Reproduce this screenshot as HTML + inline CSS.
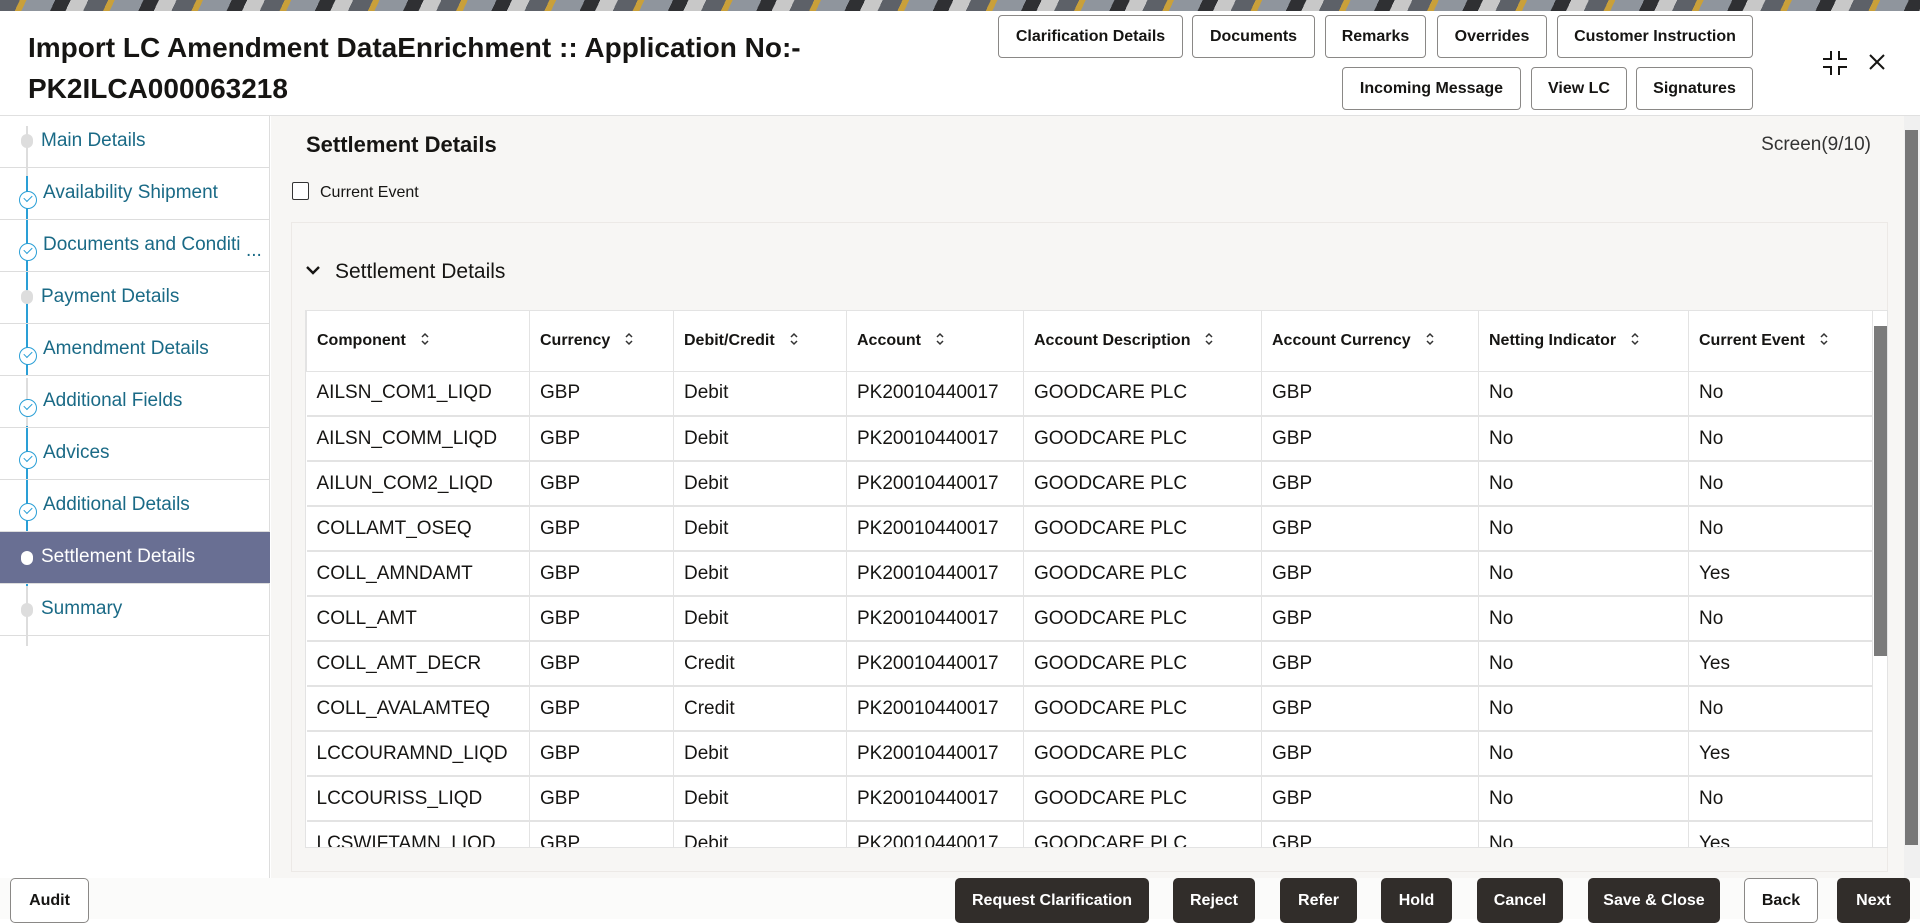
<!DOCTYPE html>
<html><head><meta charset="utf-8">
<style>
*{box-sizing:border-box;margin:0;padding:0}
body{width:1920px;height:919px;overflow:hidden;font-family:"Liberation Sans",sans-serif;background:#fff;position:relative;color:#161513}
.banner{position:absolute;left:0;top:0;width:1920px;height:11px;background:repeating-linear-gradient(115deg,#5d6168 0 18px,#c9a03a 18px 24px,#8f959d 24px 50px,#2f3033 50px 64px,#c8c8c8 64px 80px)}
.header{position:absolute;left:0;top:11px;width:1920px;height:105px;background:#fff;border-bottom:1px solid #e0e0e0}
.title{position:absolute;left:28px;top:16px;font-size:28px;font-weight:bold;line-height:41px;color:#161513}
.btn{position:absolute;height:43px;border:1px solid #8a8886;border-radius:4px;background:#fff;font-size:16px;font-weight:bold;display:flex;align-items:center;justify-content:center;color:#161513}
.side{position:absolute;left:0;top:116px;width:270px;height:803px;background:#fff;border-right:1px solid #ddd}
.item{position:absolute;left:0;width:270px;height:52px;border-bottom:1px solid #ddd;font-size:19px;color:#1a6a86;padding-left:41px;line-height:50px;white-space:nowrap}
.item.active{background:#696f93;color:#fff}
.vline{position:absolute;left:26px;width:2px}
.dot{position:absolute;left:21px;width:12px;height:14px;border-radius:6px;background:#ddd}
.chk{position:absolute;left:19px;width:18px;height:18px;border:1.5px solid #2a9fd6;border-radius:50%;background:#fff}
.chk:after{content:"";position:absolute;left:4px;top:3px;width:7px;height:4px;border-left:1.5px solid #2a9fd6;border-bottom:1.5px solid #2a9fd6;transform:rotate(-45deg)}
.main{position:absolute;left:271px;top:116px;width:1633px;height:762px;background:#f7f6f4}
.panel{position:absolute;left:291px;top:222px;width:1597px;height:650px;background:#f7f6f4;border:1px solid #ece9e6}
table{position:absolute;left:305px;top:310px;width:1583px;border-collapse:collapse;background:#fff}
th{height:60px;font-size:16px;font-weight:bold;text-align:left;padding-left:10px;border:1px solid #e3e3e3;border-top:none;white-space:nowrap}
td{height:45px;font-size:19px;padding-left:10px;border-right:1px solid #e3e3e3;border-bottom:2px solid #e3e3e3;white-space:nowrap}
.s{display:inline-block;margin-left:14px;vertical-align:-1px}
.fb{position:absolute;top:878px;height:45px;border-radius:5px;background:#312d2a;color:#fff;font-size:16px;font-weight:bold;display:flex;align-items:center;justify-content:center}
</style></head><body>
<div class="banner"></div>
<div class="header">
<div class="title">Import LC Amendment DataEnrichment :: Application No:-<br>PK2ILCA000063218</div>
</div>
<div class="btn" style="left:998px;top:15px;width:185px">Clarification Details</div>
<div class="btn" style="left:1192px;top:15px;width:123px">Documents</div>
<div class="btn" style="left:1325px;top:15px;width:101px">Remarks</div>
<div class="btn" style="left:1437px;top:15px;width:110px">Overrides</div>
<div class="btn" style="left:1557px;top:15px;width:196px">Customer Instruction</div>
<div class="btn" style="left:1342px;top:67px;width:179px">Incoming Message</div>
<div class="btn" style="left:1531px;top:67px;width:96px">View LC</div>
<div class="btn" style="left:1636px;top:67px;width:117px">Signatures</div>
<svg style="position:absolute;left:1822px;top:50px" width="26" height="26" viewBox="0 0 26 26" fill="none" stroke="#161513" stroke-width="2"><path d="M9 1v8H1M17 1v8h8M9 25v-8H1M17 25v-8h8"/></svg>
<svg style="position:absolute;left:1869px;top:54px" width="16" height="16" viewBox="0 0 16 16" stroke="#161513" stroke-width="2"><path d="M1 1l14 14M15 1L1 15"/></svg>

<div class="side">
<div class="vline" style="top:10px;height:50px;background:#ddd"></div>
<div class="vline" style="top:60px;height:200px;background:#2a9fd6"></div>
<div class="vline" style="top:262px;height:48px;background:#ddd"></div>
<div class="vline" style="top:310px;height:210px;background:#2a9fd6"></div>
<div class="vline" style="top:470px;height:60px;background:#ddd"></div>
<div class="item" style="top:0">Main Details</div>
<div class="item" style="top:52px;padding-left:43px">Availability Shipment</div>
<div class="item" style="top:104px;padding-left:43px">Documents and Conditi<span style="position:absolute;left:246px;top:6px">...</span></div>
<div class="item" style="top:156px">Payment Details</div>
<div class="item" style="top:208px;padding-left:43px">Amendment Details</div>
<div class="item" style="top:260px;padding-left:43px">Additional Fields</div>
<div class="item" style="top:312px;padding-left:43px">Advices</div>
<div class="item" style="top:364px;padding-left:43px">Additional Details</div>
<div class="item active" style="top:416px">Settlement Details</div>
<div class="item" style="top:468px">Summary</div>
<div class="dot" style="top:18px"></div>
<div class="chk" style="top:75px"></div>
<div class="chk" style="top:127px"></div>
<div class="dot" style="top:174px"></div>
<div class="chk" style="top:231px"></div>
<div class="chk" style="top:283px"></div>
<div class="chk" style="top:335px"></div>
<div class="chk" style="top:387px"></div>
<div class="dot" style="top:435px;background:#fff"></div>
<div class="dot" style="top:487px"></div>
</div>

<div class="main"></div>
<div style="position:absolute;left:306px;top:132px;font-size:22px;font-weight:bold">Settlement Details</div>
<div style="position:absolute;right:49px;top:134px;font-size:19px;color:#333">Screen(9/10)</div>
<div style="position:absolute;left:292px;top:182px;width:17px;height:18px;border:1.5px solid #333;border-radius:2px;background:#fff"></div>
<div style="position:absolute;left:320px;top:184px;font-size:16px">Current Event</div>
<div class="panel"></div>
<svg style="position:absolute;left:305px;top:265px" width="16" height="11" viewBox="0 0 16 11" fill="none" stroke="#161513" stroke-width="2.4"><path d="M2 2l6 6 6-6"/></svg>
<div style="position:absolute;left:335px;top:260px;font-size:21px">Settlement Details</div>
<div style="position:absolute;left:305px;top:310px;width:1583px;height:538px;overflow:hidden;background:#fff;border:1px solid #e3e3e3">
<table style="left:0;top:0;width:1567px">
<tr><th style="width:223px">Component<svg class="s" width="10" height="14" viewBox="0 0 10 14" fill="none" stroke="#333" stroke-width="1.5"><path d="M2 5l3-3 3 3M2 9l3 3 3-3"/></svg></th><th style="width:144px">Currency<svg class="s" width="10" height="14" viewBox="0 0 10 14" fill="none" stroke="#333" stroke-width="1.5"><path d="M2 5l3-3 3 3M2 9l3 3 3-3"/></svg></th><th style="width:173px">Debit/Credit<svg class="s" width="10" height="14" viewBox="0 0 10 14" fill="none" stroke="#333" stroke-width="1.5"><path d="M2 5l3-3 3 3M2 9l3 3 3-3"/></svg></th><th style="width:177px">Account<svg class="s" width="10" height="14" viewBox="0 0 10 14" fill="none" stroke="#333" stroke-width="1.5"><path d="M2 5l3-3 3 3M2 9l3 3 3-3"/></svg></th><th style="width:238px">Account Description<svg class="s" width="10" height="14" viewBox="0 0 10 14" fill="none" stroke="#333" stroke-width="1.5"><path d="M2 5l3-3 3 3M2 9l3 3 3-3"/></svg></th><th style="width:217px">Account Currency<svg class="s" width="10" height="14" viewBox="0 0 10 14" fill="none" stroke="#333" stroke-width="1.5"><path d="M2 5l3-3 3 3M2 9l3 3 3-3"/></svg></th><th style="width:210px">Netting Indicator<svg class="s" width="10" height="14" viewBox="0 0 10 14" fill="none" stroke="#333" stroke-width="1.5"><path d="M2 5l3-3 3 3M2 9l3 3 3-3"/></svg></th><th>Current Event<svg class="s" width="10" height="14" viewBox="0 0 10 14" fill="none" stroke="#333" stroke-width="1.5"><path d="M2 5l3-3 3 3M2 9l3 3 3-3"/></svg></th></tr>
<tr><td>AILSN_COM1_LIQD</td><td>GBP</td><td>Debit</td><td>PK20010440017</td><td>GOODCARE PLC</td><td>GBP</td><td>No</td><td>No</td></tr>
<tr><td>AILSN_COMM_LIQD</td><td>GBP</td><td>Debit</td><td>PK20010440017</td><td>GOODCARE PLC</td><td>GBP</td><td>No</td><td>No</td></tr>
<tr><td>AILUN_COM2_LIQD</td><td>GBP</td><td>Debit</td><td>PK20010440017</td><td>GOODCARE PLC</td><td>GBP</td><td>No</td><td>No</td></tr>
<tr><td>COLLAMT_OSEQ</td><td>GBP</td><td>Debit</td><td>PK20010440017</td><td>GOODCARE PLC</td><td>GBP</td><td>No</td><td>No</td></tr>
<tr><td>COLL_AMNDAMT</td><td>GBP</td><td>Debit</td><td>PK20010440017</td><td>GOODCARE PLC</td><td>GBP</td><td>No</td><td>Yes</td></tr>
<tr><td>COLL_AMT</td><td>GBP</td><td>Debit</td><td>PK20010440017</td><td>GOODCARE PLC</td><td>GBP</td><td>No</td><td>No</td></tr>
<tr><td>COLL_AMT_DECR</td><td>GBP</td><td>Credit</td><td>PK20010440017</td><td>GOODCARE PLC</td><td>GBP</td><td>No</td><td>Yes</td></tr>
<tr><td>COLL_AVALAMTEQ</td><td>GBP</td><td>Credit</td><td>PK20010440017</td><td>GOODCARE PLC</td><td>GBP</td><td>No</td><td>No</td></tr>
<tr><td>LCCOURAMND_LIQD</td><td>GBP</td><td>Debit</td><td>PK20010440017</td><td>GOODCARE PLC</td><td>GBP</td><td>No</td><td>Yes</td></tr>
<tr><td>LCCOURISS_LIQD</td><td>GBP</td><td>Debit</td><td>PK20010440017</td><td>GOODCARE PLC</td><td>GBP</td><td>No</td><td>No</td></tr>
<tr><td>LCSWIFTAMN_LIQD</td><td>GBP</td><td>Debit</td><td>PK20010440017</td><td>GOODCARE PLC</td><td>GBP</td><td>No</td><td>Yes</td></tr>
</table>
<div style="position:absolute;left:1568px;top:15px;width:13px;height:330px;background:#7b7b7b"></div>
</div>
<div style="position:absolute;left:1904px;top:116px;width:16px;height:762px;background:#f0f0f0"></div>
<div style="position:absolute;left:1905px;top:130px;width:13px;height:715px;background:#777"></div>

<div style="position:absolute;left:0;top:878px;width:1920px;height:41px;background:#fbfbfa"></div>
<div class="btn" style="left:10px;top:878px;width:79px;height:45px;border-radius:5px">Audit</div>
<div class="fb" style="left:955px;width:194px">Request Clarification</div>
<div class="fb" style="left:1173px;width:82px">Reject</div>
<div class="fb" style="left:1280px;width:77px">Refer</div>
<div class="fb" style="left:1381px;width:71px">Hold</div>
<div class="fb" style="left:1477px;width:86px">Cancel</div>
<div class="fb" style="left:1588px;width:132px">Save &amp; Close</div>
<div class="btn" style="left:1744px;top:878px;width:74px;height:45px;border-radius:5px">Back</div>
<div class="fb" style="left:1837px;width:73px">Next</div>
</body></html>
